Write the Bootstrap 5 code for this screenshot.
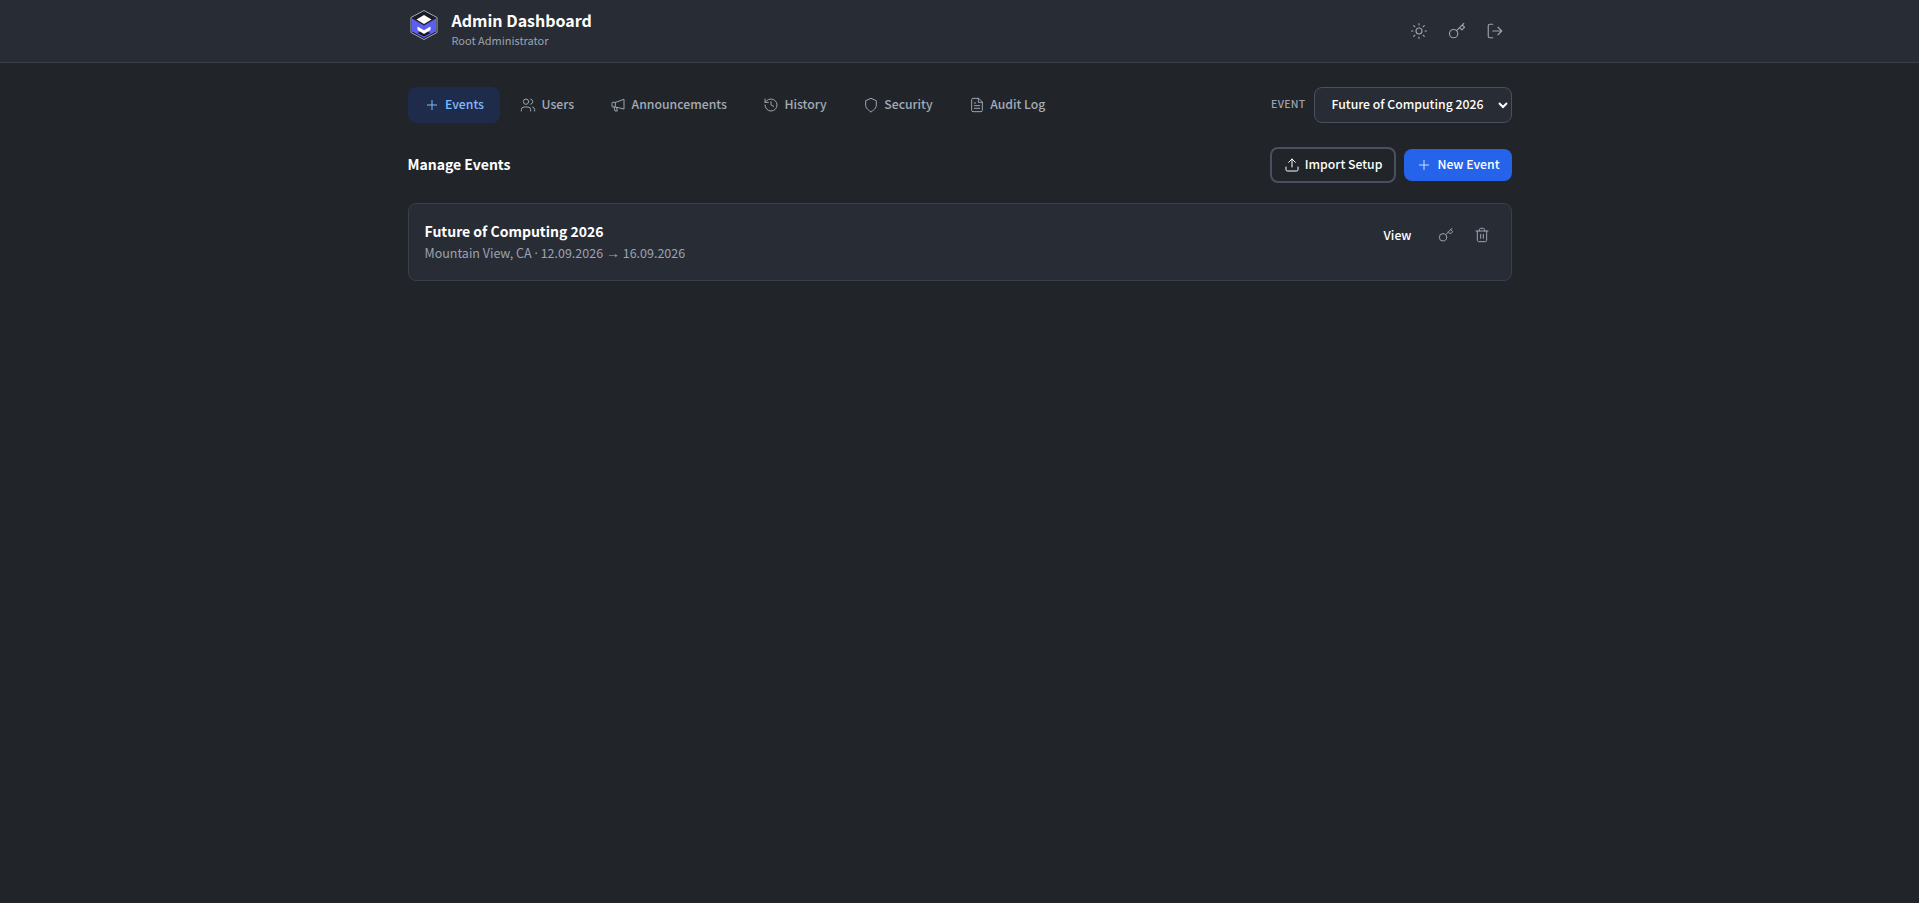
<!DOCTYPE html>
<html lang="en" data-bs-theme="dark">
<head>
<meta charset="utf-8">
<title>Admin Dashboard</title>
<link href="https://cdn.jsdelivr.net/npm/bootstrap@5.3.0/dist/css/bootstrap.min.css" rel="stylesheet">
<style>
html,body{height:100%}
body{background:#212529;color:#fff;font-family:"Noto Sans CJK SC","Noto Sans",sans-serif;font-size:12.25px;min-height:903px}
.wrap{max-width:1152px;margin:0 auto;padding:0 24px}
.topbar{background:#282c35;border-bottom:1px solid #3b3f4b;height:63px}
.topbar .wrap{height:62px}
.brand-box{margin-bottom:6px}
.brand-logo{margin-top:2px;flex:none}
.brand-name{font-size:16px;font-weight:700;line-height:24px;color:#fff}
.brand-sub{font-size:11px;line-height:16px;color:#9ca3af}
.ico{width:16px;height:16px;fill:none;stroke:currentColor;stroke-width:1.5;stroke-linecap:round;stroke-linejoin:round;flex:none}
.ico-lg{width:18px;height:18px}
.icon-btn{color:#9ca3af;background:none;border:0;padding:8px;line-height:0;border-radius:8px}
.main-area{padding-top:24px}
.tab{display:flex;align-items:center;gap:5.5px;height:36px;padding:0 16px 2px;border-radius:8px;color:#a3abb7;font-weight:500;font-size:12.25px;text-decoration:none;white-space:nowrap}
.tab .ico{margin-top:2px;color:#9ca3af}
.tab.on{background:#1e2b4a;color:#7dbbff}
.tab.on .ico{color:#7dbbff}
.ev-label{font-size:10.5px;font-weight:500;color:#9ca3af;letter-spacing:.3px;padding-bottom:2px}
.ev-select{width:198px;height:36px;background-color:#282c35;color:#fff;border:1px solid #4b5060;border-radius:8px;font-size:12.25px;font-weight:500;padding:0 4px 2px 13px}
.page-title{font-size:14px;font-weight:700;margin:0;padding-bottom:2px;color:#fff}
.btn-imp,.btn-new{display:flex;align-items:center;gap:5px;font-size:12.25px;font-weight:500;color:#fff;border-radius:8px;white-space:nowrap}
.btn-imp{height:36px;padding:0 12px 2px;border:2px solid #4b5060;background:transparent}
.btn-new{height:32px;padding:0 12px 2px;border:0;background:#2563eb}
.btn-imp .ico,.btn-new .ico{margin-top:2px}
.btn-new .ico{color:#cfe0ff}
.ev-card{background:#282c35;border:1px solid #3b3f4b;border-radius:8px;height:78px;padding:0 16px;margin-top:20px}
.ev-title{font-size:14px;font-weight:700;line-height:20px;color:#fff}
.ev-meta{font-size:12.5px;line-height:18px;color:#9ca3af;margin-top:3px}
.dot-sep{font-family:"Noto Sans",sans-serif}
.arrow-sep{font-family:"Liberation Sans",sans-serif;font-size:14px}
.view-link{font-size:12.25px;font-weight:500;color:#fff;text-decoration:none;padding:0 14px 0 12px}
.card-ico{color:#9ca3af;background:none;border:0;padding:8px;line-height:0}
.actions{margin-top:15px;margin-right:-3px}
</style>
</head>
<body>
<header class="topbar">
  <div class="wrap d-flex align-items-center justify-content-between">
    <div class="d-flex align-items-start gap-2 brand-box">
      <svg class="brand-logo" width="32" height="30" viewBox="-2.500 0 32 30" aria-hidden="true">
        <path d="M13.500.5 26.500 7.500v15L13.500 29.500.5 22.500v-15z" fill="#1c1d24" stroke="#c8cbd8" stroke-width=".8"/>
        <path d="M1.500 8.500 13.500 15.500 25.500 8.500v13L13.500 28 1.500 21.500z" fill="#5b5ff0"/>
        <path d="M7 23 13.500 26.500 20 23 13.500 20z" fill="#15161c"/>
        <path d="M13.500 5 21 9.500 13.500 14 6 9.500z" fill="#fff"/>
        <path d="M7 16.500 13.500 20.200 20 16.500v3.500L13.500 24 7 20z" fill="#fff"/>
      </svg>
      <div class="ms-1">
        <div class="brand-name">Admin Dashboard</div>
        <div class="brand-sub">Root Administrator</div>
      </div>
    </div>
    <div class="d-flex align-items-center gap-1">
      <button class="icon-btn" aria-label="Theme"><svg class="ico ico-lg" viewBox="0 0 24 24"><circle cx="12" cy="12" r="4"/><path d="M12 2v2M12 20v2M4.930 4.930l1.410 1.410M17.660 17.660l1.410 1.410M2 12h2M20 12h2M6.340 17.660l-1.410 1.410M19.070 4.930l-1.410 1.410"/></svg></button>
      <button class="icon-btn" aria-label="Key"><svg class="ico ico-lg" viewBox="0 0 24 24"><circle cx="7.500" cy="15.500" r="5.500"/><path d="m21 2-9.600 9.600M15.500 7.500l3 3L22 7l-3-3"/></svg></button>
      <button class="icon-btn" aria-label="Sign out"><svg class="ico ico-lg" viewBox="0 0 24 24"><path d="M9 21H5a2 2 0 0 1-2-2V5a2 2 0 0 1 2-2h4M16 17l5-5-5-5M21 12H9"/></svg></button>
    </div>
  </div>
</header>
<main class="wrap main-area">
  <div class="d-flex align-items-center justify-content-between">
    <nav class="d-flex align-items-center gap-1">
      <a class="tab on" href="#"><svg class="ico" viewBox="0 0 24 24"><path d="M12 5v14M5 12h14"/></svg>Events</a>
      <a class="tab" href="#"><svg class="ico" viewBox="0 0 24 24"><circle cx="9" cy="7" r="4"/><path d="M16 21v-2a4 4 0 0 0-4-4H6a4 4 0 0 0-4 4v2M16 3.100a4 4 0 0 1 0 7.800M22 21v-2a4 4 0 0 0-3-3.900"/></svg>Users</a>
      <a class="tab" href="#"><svg class="ico" viewBox="0 0 24 24"><path d="M21 4v14L8 15H4a1 1 0 0 1-1-1V9a1 1 0 0 1 1-1h4zM8 8v7M6 15l1.500 6h3.500l-1.300-5.500"/></svg>Announcements</a>
      <a class="tab" href="#"><svg class="ico" viewBox="0 0 24 24"><path d="M3 12a9 9 0 1 0 9-9 9.750 9.750 0 0 0-6.740 2.740L3 8M3 3v5h5M12 7v5l4 2"/></svg>History</a>
      <a class="tab" href="#"><svg class="ico" viewBox="0 0 24 24"><path d="M12 22s8-3 8-10V5.500L12 2 4 5.500V12c0 7 8 10 8 10z"/></svg>Security</a>
      <a class="tab" href="#"><svg class="ico" viewBox="0 0 24 24"><path d="M14 2H6a2 2 0 0 0-2 2v16a2 2 0 0 0 2 2h12a2 2 0 0 0 2-2V8zM14 2v6h6M8 13h8M8 17h8M8 9h2"/></svg>Audit Log</a>
    </nav>
    <div class="d-flex align-items-center gap-2">
      <span class="ev-label">EVENT</span>
      <select class="ev-select" aria-label="Event"><option>Future of Computing 2026</option></select>
    </div>
  </div>
  <div class="d-flex align-items-center justify-content-between mt-4">
    <h2 class="page-title">Manage Events</h2>
    <div class="d-flex align-items-center gap-2">
      <button class="btn-imp"><svg class="ico" viewBox="0 0 24 24"><path d="M21 15v4a2 2 0 0 1-2 2H5a2 2 0 0 1-2-2v-4M17 8l-5-5-5 5M12 3v12"/></svg>Import Setup</button>
      <button class="btn-new"><svg class="ico" viewBox="0 0 24 24"><path d="M12 5v14M5 12h14"/></svg>New Event</button>
    </div>
  </div>
  <section class="ev-card d-flex align-items-center justify-content-between">
    <div>
      <div class="ev-title">Future of Computing 2026</div>
      <div class="ev-meta">Mountain View, CA <span class="dot-sep">·</span> 12.09.2026 <span class="arrow-sep">→</span> 16.09.2026</div>
    </div>
    <div class="d-flex align-items-center gap-1 align-self-start actions">
      <a class="view-link" href="#">View</a>
      <button class="card-ico" aria-label="Key"><svg class="ico" viewBox="0 0 24 24"><circle cx="7.500" cy="15.500" r="5.500"/><path d="m21 2-9.600 9.600M15.500 7.500l3 3L22 7l-3-3"/></svg></button>
      <button class="card-ico" aria-label="Delete"><svg class="ico" viewBox="0 0 24 24"><path d="M3 6h18M19 6v14c0 1-1 2-2 2H7c-1 0-2-1-2-2V6M8 6V4c0-1 1-2 2-2h4c1 0 2 1 2 2v2M10 11v6M14 11v6"/></svg></button>
    </div>
  </section>
</main>
<script src="https://cdn.jsdelivr.net/npm/bootstrap@5.3.0/dist/js/bootstrap.bundle.min.js"></script>
</body>
</html>
